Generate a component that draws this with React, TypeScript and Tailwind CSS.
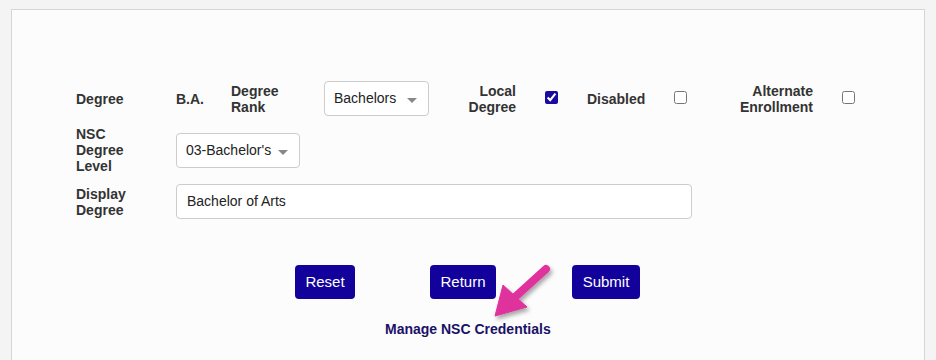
import React from "react";

function Select({ value, width }: { value: string; width: string }) {
  return (
    <div className={`relative h-[35px] ${width} rounded-[4px] border border-[#cccccc] bg-white`}>
      <div className="flex h-full items-center pl-[9px] text-[14px] text-[#222]">{value}</div>
      <span className="absolute right-[11px] top-[16px] h-0 w-0 border-x-[5px] border-t-[5px] border-x-transparent border-t-[#888]" />
    </div>
  );
}

function Check({ checked }: { checked?: boolean }) {
  return (
    <input
      type="checkbox"
      defaultChecked={checked}
      className="m-0 h-[13px] w-[13px] accent-[#170ba0]"
    />
  );
}

function Arrow() {
  return (
    <svg
      className="pointer-events-none absolute left-[476px] top-[248px]"
      width="70"
      height="70"
      viewBox="0 0 70 70"
    >
      <defs>
        <filter id="sh" x="-30%" y="-30%" width="160%" height="160%">
          <feGaussianBlur in="SourceAlpha" stdDeviation="2" />
          <feOffset dx="2" dy="3" />
          <feComponentTransfer>
            <feFuncA type="linear" slope="0.35" />
          </feComponentTransfer>
          <feMerge>
            <feMergeNode />
            <feMergeNode in="SourceGraphic" />
          </feMerge>
        </filter>
      </defs>
      <g filter="url(#sh)" fill="#e0329c" stroke="#e0329c">
        <line x1="58" y1="11" x2="26" y2="40" strokeWidth="8" strokeLinecap="round" />
        <polygon points="7,58 15,27 39,49" strokeWidth="1" strokeLinejoin="round" />
      </g>
    </svg>
  );
}

export default function App() {
  const label = "text-[14px] font-bold leading-[16px] text-[#333]";
  return (
    <div className="min-h-[360px] bg-[#f4f4f4] pl-[11px] pr-[11px] pt-[9px] font-['Liberation_Sans',Arial,sans-serif]">
      <div className="relative h-[360px] border border-b-0 border-[#d6d6d6] bg-[#fcfcfc] pl-[64px] pt-[71px]">
        {/* Row 1 */}
        <div className="flex h-[35px] items-center">
          <div className={`w-[100px] ${label}`}>Degree</div>
          <div className={`w-[55px] ${label}`}>B.A.</div>
          <div className={`w-[93px] ${label}`}>
            Degree
            <br />
            Rank
          </div>
          <Select value="Bachelors" width="w-[105px]" />
          <div className={`w-[87px] text-right ${label}`}>
            Local
            <br />
            Degree
          </div>
          <div className="w-[71px] pl-[29px]">
            <Check checked />
          </div>
          <div className={`w-[87px] ${label}`}>Disabled</div>
          <div className="w-[0px]">
            <Check />
          </div>
          <div className={`w-[139px] text-right ${label}`}>
            Alternate
            <br />
            Enrollment
          </div>
          <div className="pl-[29px]">
            <Check />
          </div>
        </div>

        {/* Row 2 */}
        <div className="mt-[10px] flex items-center">
          <div className={`w-[100px] ${label}`}>
            NSC
            <br />
            Degree
            <br />
            Level
          </div>
          <Select value="03-Bachelor's" width="w-[124px]" />
        </div>

        {/* Row 3 */}
        <div className="mt-[10px] flex items-center">
          <div className={`w-[100px] ${label}`}>
            Display
            <br />
            Degree
          </div>
          <div className="flex h-[35px] w-[516px] items-center rounded-[4px] border border-[#cccccc] bg-white pl-[10px] text-[14px] text-[#222]">
            Bachelor of Arts
          </div>
        </div>

        {/* Buttons */}
        <div className="mt-[46px] flex pl-[219px]">
          <button className="h-[34px] w-[60px] rounded-[4px] bg-[#12029b] text-[15px] text-white">Reset</button>
          <button className="ml-[75px] h-[34px] w-[66px] rounded-[4px] bg-[#12029b] text-[15px] text-white">Return</button>
          <button className="ml-[76px] h-[34px] w-[68px] rounded-[4px] bg-[#12029b] text-[15px] text-white">Submit</button>
        </div>

        <div className="mt-[20px] pl-[309px] text-[14px] font-bold text-[#1a1266]">Manage NSC Credentials</div>

        <Arrow />
      </div>
    </div>
  );
}
